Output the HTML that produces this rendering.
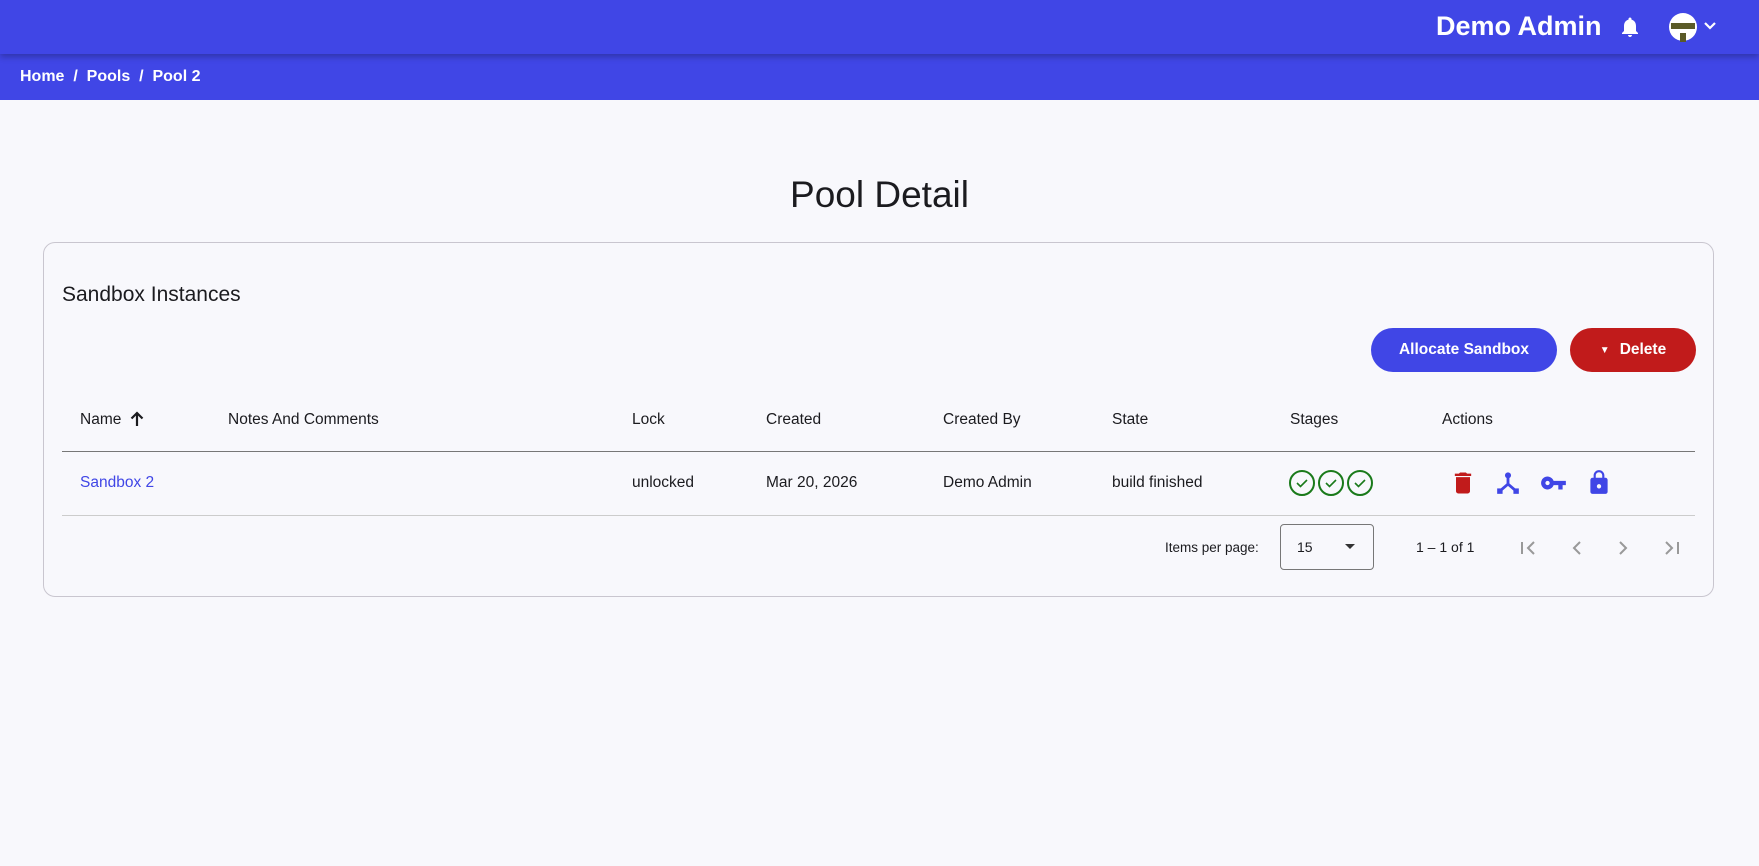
<!DOCTYPE html>
<html><head><meta charset="utf-8"><style>
*{box-sizing:border-box;margin:0;padding:0}
body{width:1759px;height:866px;background:#f8f8fc;font-family:"Liberation Sans",sans-serif;color:#1b1b1f;position:relative;overflow:hidden}
.top{position:absolute;left:0;top:0;width:1759px;height:54px;background:#4046e6;box-shadow:0 3px 6px rgba(0,0,0,.25);z-index:2}
.crumb{position:absolute;left:0;top:54px;width:1759px;height:46px;background:#4046e6;color:#fff;font-size:16px;font-weight:bold}
.abs{position:absolute;white-space:nowrap}
.card{position:absolute;left:43px;top:242px;width:1671px;height:355px;border:1px solid #c9c6cf;border-radius:12px}
.th{font-size:15.5px;color:#1b1b1f}
.td{font-size:15.5px;color:#1b1b1f}
.btn{position:absolute;height:44px;border-radius:22px;color:#fff;font-weight:bold;font-size:15.5px;display:flex;align-items:center;justify-content:center}
</style></head><body>
<div class="top">
 <div class="abs" style="left:1436px;top:11px;color:#fff;font-weight:bold;font-size:27px">Demo Admin</div>
 <svg class="abs" style="left:1618px;top:15px" width="24" height="24" viewBox="0 0 24 24"><path fill="#fff" d="M12 22c1.1 0 2-.9 2-2h-4c0 1.1.9 2 2 2zm6-6v-5c0-3.07-1.64-5.64-4.5-6.32V4c0-.83-.67-1.5-1.5-1.5s-1.5.67-1.5 1.5v.68C7.63 5.36 6 7.92 6 11v5l-2 2v1h16v-1l-2-2z"/></svg>
 <svg class="abs" style="left:1668px;top:12px" width="30" height="30" viewBox="0 0 30 30"><circle cx="15" cy="15" r="14" fill="#fff"/><rect x="3" y="11" width="24" height="6" fill="#5a5a28"/><rect x="12" y="21" width="6" height="9" fill="#5a5a28"/></svg>
 <svg class="abs" style="left:1702px;top:18px" width="16" height="16" viewBox="0 0 16 16"><path d="M3 5l5 5 5-5" stroke="#fff" stroke-width="2.2" fill="none"/></svg>
</div>
<div class="crumb"><div class="abs" style="left:20px;top:14px">Home &nbsp;/ &nbsp;Pools &nbsp;/ &nbsp;Pool 2</div></div>
<div class="abs" style="left:0;width:1759px;text-align:center;top:174px;font-size:37px">Pool Detail</div>
<div class="card"></div>
<div class="abs" style="left:62px;top:283px;font-size:21px">Sandbox Instances</div>
<div class="btn" style="left:1371px;top:328px;width:186px;background:#4046e6">Allocate Sandbox</div>
<div class="btn" style="left:1570px;top:328px;width:126px;background:#c11b1b"><span style="font-size:10px;margin-right:10px">▼</span>Delete</div>
<div class="abs th" style="left:80px;top:411px">Name</div>
<svg class="abs" style="left:129px;top:410px" width="16" height="18" viewBox="0 0 16 18"><path d="M8 16V3M2.5 8.5L8 3l5.5 5.5" stroke="#1b1b1f" stroke-width="2.2" fill="none"/></svg>
<div class="abs th" style="left:228px;top:411px">Notes And Comments</div>
<div class="abs th" style="left:632px;top:411px">Lock</div>
<div class="abs th" style="left:766px;top:411px">Created</div>
<div class="abs th" style="left:943px;top:411px">Created By</div>
<div class="abs th" style="left:1112px;top:411px">State</div>
<div class="abs th" style="left:1290px;top:411px">Stages</div>
<div class="abs th" style="left:1442px;top:411px">Actions</div>
<div class="abs" style="left:62px;top:451px;width:1633px;height:1px;background:#777"></div>
<div class="abs td" style="left:80px;top:474px;color:#4046e6">Sandbox 2</div>
<div class="abs td" style="left:632px;top:474px">unlocked</div>
<div class="abs td" style="left:766px;top:474px">Mar 20, 2026</div>
<div class="abs td" style="left:943px;top:474px">Demo Admin</div>
<div class="abs td" style="left:1112px;top:474px">build finished</div>
<svg class="abs" style="left:1288px;top:469px" width="88" height="28" viewBox="0 0 88 28">
<g fill="none" stroke="#1a7a1a" stroke-width="2"><circle cx="14" cy="14" r="12"/><circle cx="43" cy="14" r="12"/><circle cx="72" cy="14" r="12"/>
<path d="M9 14l3.5 3.5L19 11M38 14l3.5 3.5L48 11M67 14l3.5 3.5L77 11" stroke-width="1.6"/></g></svg>
<svg class="abs" style="left:1449px;top:469px" width="28" height="28" viewBox="0 0 24 24"><path fill="#c11b1b" d="M6 19c0 1.1.9 2 2 2h8c1.1 0 2-.9 2-2V7H6v12zM19 4h-3.5l-1-1h-5l-1 1H5v2h14V4z"/></svg>
<svg class="abs" style="left:1495px;top:470px" width="26" height="26" viewBox="0 0 24 24"><g fill="#4046e6"><circle cx="12" cy="5" r="2.8"/><rect x="2" y="17" width="5" height="5"/><rect x="17" y="17" width="5" height="5"/></g><path d="M12 6v7M12 13l-7 6M12 13l7 6" stroke="#4046e6" stroke-width="2.6" fill="none"/></svg>
<svg class="abs" style="left:1540px;top:470px" width="28" height="26" viewBox="0 0 26 24"><path fill="#4046e6" d="M12.65 10A6 6 0 1 0 12.65 14H17v4h4v-4h3v-4H12.65zM7 14a2 2 0 1 1 0-4 2 2 0 0 1 0 4z"/></svg>
<svg class="abs" style="left:1586px;top:468px" width="26" height="28" viewBox="0 0 24 26"><path fill="#4046e6" d="M18 9h-1V7c0-2.76-2.24-5-5-5S7 4.24 7 7v2H6c-1.1 0-2 .9-2 2v11c0 1.1.9 2 2 2h12c1.1 0 2-.9 2-2V11c0-1.1-.9-2-2-2zM12 19a2 2 0 1 1 0-4 2 2 0 0 1 0 4zM9 9V7c0-1.66 1.340-3 3-3s3 1.34 3 3v2H9z"/></svg>
<div class="abs" style="left:62px;top:515px;width:1633px;height:1px;background:#ccc"></div>
<div class="abs" style="left:1165px;top:540px;font-size:13.5px">Items per page:</div>
<div class="abs" style="left:1280px;top:524px;width:94px;height:46px;border:1px solid #777;border-radius:4px"></div>
<div class="abs" style="left:1297px;top:539px;font-size:14px">15</div>
<svg class="abs" style="left:1344px;top:543px" width="12" height="8"><path d="M1 1h10L6 6z" fill="#333"/></svg>
<div class="abs" style="left:1416px;top:539px;font-size:14px">1 – 1 of 1</div>
<svg class="abs" style="left:1516px;top:536px" width="170" height="24" viewBox="0 0 170 24" fill="none" stroke="#999" stroke-width="2"><path d="M6 6v12M18 6l-6 6 6 6M64 6l-6 6 6 6M104 6l6 6-6 6M150 6l6 6-6 6M162 6v12"/></svg>
</body></html>
